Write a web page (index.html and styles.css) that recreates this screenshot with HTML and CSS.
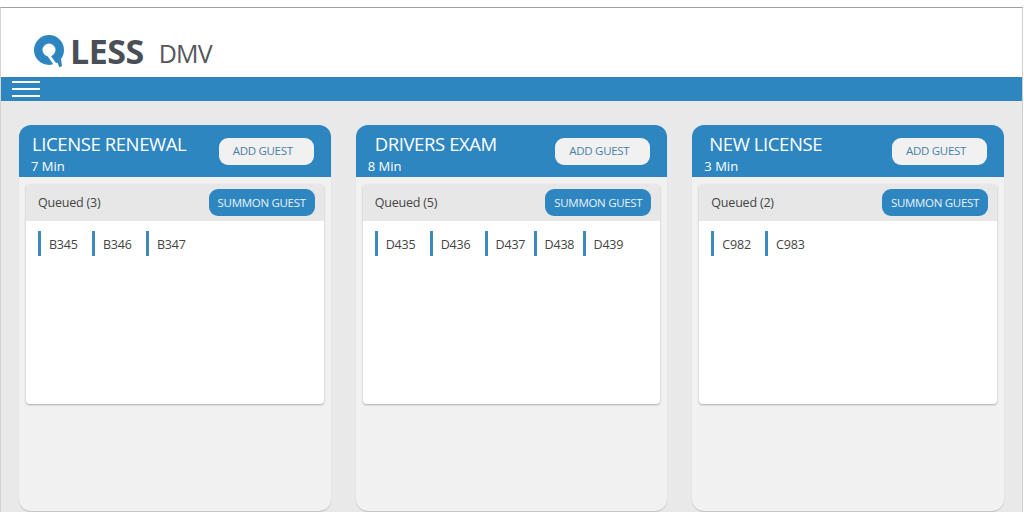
FILE: index.html
```html
<!DOCTYPE html>
<html lang="en">
<head>
    <meta charset="UTF-8">
    <meta name="viewport" content="width=device-width, initial-scale=1.0">
    <title>QLESS DMV</title>
    <link rel="stylesheet" href="styles.css">
</head>
<body>
    <div class="pantalla">
        <header class="marca">
            <svg class="logo-q" width="31" height="33" viewBox="0 0 31 33" aria-hidden="true">
                <circle cx="15" cy="15" r="10.75" fill="none" stroke="#2e86c1" stroke-width="8.5"/>
                <path d="M21 22 L27 24 L28 31 L25.5 32.5 Z" fill="#2e86c1"/>
                <path d="M14.5 20 L23 32" stroke="#fff" stroke-width="3" fill="none"/>
            </svg>
            <span class="logo-less">LESS</span>
            <span class="logo-dmv">DMV</span>
        </header>

        <nav class="barra">
            <div class="hamburguesa"><span></span><span></span><span></span></div>
        </nav>

        <main class="colas">
            <section class="cola">
                <div class="cola-head">
                    <div class="cola-info">
                        <h2 class="cola-titulo">LICENSE RENEWAL</h2>
                        <p class="cola-espera">7 Min</p>
                    </div>
                    <button class="btn-add">ADD GUEST</button>
                </div>
                <div class="panel">
                    <div class="panel-head">
                        <span class="panel-titulo">Queued (3)</span>
                        <button class="btn-summon">SUMMON GUEST</button>
                    </div>
                    <div class="tickets">
                        <span class="ticket">B345</span>
                        <span class="ticket">B346</span>
                        <span class="ticket">B347</span>
                    </div>
                </div>
            </section>

            <section class="cola">
                <div class="cola-head">
                    <div class="cola-info">
                        <h2 class="cola-titulo sangria">DRIVERS EXAM</h2>
                        <p class="cola-espera">8 Min</p>
                    </div>
                    <button class="btn-add">ADD GUEST</button>
                </div>
                <div class="panel">
                    <div class="panel-head">
                        <span class="panel-titulo">Queued (5)</span>
                        <button class="btn-summon">SUMMON GUEST</button>
                    </div>
                    <div class="tickets">
                        <span class="ticket">D435</span>
                        <span class="ticket">D436</span>
                        <span class="ticket">D437</span>
                        <span class="ticket junto">D438</span>
                        <span class="ticket junto">D439</span>
                    </div>
                </div>
            </section>

            <section class="cola">
                <div class="cola-head">
                    <div class="cola-info">
                        <h2 class="cola-titulo sangria-corta">NEW LICENSE</h2>
                        <p class="cola-espera">3 Min</p>
                    </div>
                    <button class="btn-add">ADD GUEST</button>
                </div>
                <div class="panel">
                    <div class="panel-head">
                        <span class="panel-titulo">Queued (2)</span>
                        <button class="btn-summon">SUMMON GUEST</button>
                    </div>
                    <div class="tickets">
                        <span class="ticket">C982</span>
                        <span class="ticket">C983</span>
                    </div>
                </div>
            </section>
        </main>
    </div>
</body>
</html>
```

FILE: styles.css
```css
html, body {
    height: 100%;
}

body {
    margin: 0;
    background: #fff;
    font-family: "Open Sans", Arial, sans-serif;
    overflow: hidden;
}

.pantalla {
    height: 505px;
    margin-top: 7px;
    margin-right: 1px;
    border-top: 1px solid #a0a0a0;
    border-left: 1px solid #d4d4d4;
    border-right: 1px solid #cfcfcf;
    display: flex;
    flex-direction: column;
}

/* Logo */
.marca {
    height: 69px;
    display: flex;
    align-items: flex-start;
    padding-left: 33px;
    padding-top: 27px;
    box-sizing: border-box;
}

.logo-q {
    flex: none;
}

.logo-less {
    font-size: 34px;
    line-height: 34px;
    font-weight: 700;
    letter-spacing: -0.5px;
    color: #4a4f57;
    margin-left: 5px;
    margin-top: -1px;
}

.logo-dmv {
    font-size: 25px;
    line-height: 34px;
    color: #54575c;
    letter-spacing: -0.8px;
    margin-left: 15px;
    margin-top: 1px;
}

.barra {
    height: 24px;
    background: #2e86c1;
    display: flex;
    align-items: center;
    padding-left: 11px;
    flex: none;
}

.hamburguesa {
    width: 28px;
    display: flex;
    flex-direction: column;
    gap: 4.5px;
}

.hamburguesa span {
    height: 2.5px;
    background: #fff;
}

.colas {
    flex: 1;
    background: #e9e9e9;
    display: flex;
    gap: 25px;
    padding: 24px 18px 2px;
    min-height: 0;
}

.cola {
    width: 312px;
    background: #f1f1f1;
    border-radius: 12px;
    box-shadow: 0 1px 1px #c4c4c4;
    display: flex;
    flex-direction: column;
    overflow: hidden;
}

.cola-head {
    height: 52px;
    flex: none;
    background: #2e86c1;
    color: #fff;
    display: flex;
    justify-content: space-between;
    padding: 7px 17px 0 12px;
    box-sizing: border-box;
}

.cola-titulo {
    margin: 0;
    padding-left: 1px;
    font-size: 18.5px;
    line-height: 23px;
    font-weight: 400;
    letter-spacing: -0.4px;
}

.cola-titulo.sangria {
    padding-left: 7px;
}

.cola-titulo.sangria-corta {
    padding-left: 5px;
}

.cola-espera {
    margin: 2px 0 0;
    font-size: 13px;
    line-height: 18px;
}

.btn-add {
    width: 95px;
    height: 27px;
    margin-top: 6px;
    border: 0;
    border-radius: 9px;
    background: #f1f1f1;
    color: #4a7fa8;
    font-family: inherit;
    font-size: 11.5px;
    letter-spacing: -0.3px;
    padding: 0 7px 2px 0;
}

.panel {
    margin: 7px 7px 0;
    height: 220px;
    background: #fff;
    border-radius: 4px;
    box-shadow: 0 1px 2px #aaa;
    overflow: hidden;
}

.panel-head {
    height: 37px;
    background: #e7e7e7;
    display: flex;
    align-items: center;
    justify-content: space-between;
    padding: 0 9px 0 12px;
}

.panel-titulo {
    font-size: 12.5px;
    letter-spacing: -0.2px;
    color: #444;
}

.btn-summon {
    width: 106px;
    height: 27px;
    border: 0;
    border-radius: 9px;
    background: #2e86c1;
    color: #e9f2f8;
    font-family: inherit;
    font-size: 11.5px;
    letter-spacing: -0.3px;
    padding: 0;
}

.tickets {
    display: flex;
    gap: 14.25px;
    padding: 10px 0 0 12px;
}

.ticket {
    height: 25px;
    line-height: 28px;
    border-left: 3px solid #3d89bd;
    padding-left: 8px;
    font-size: 12.5px;
    letter-spacing: -0.2px;
    color: #444;
}

.ticket.junto {
    margin-left: -6px;
}
```
